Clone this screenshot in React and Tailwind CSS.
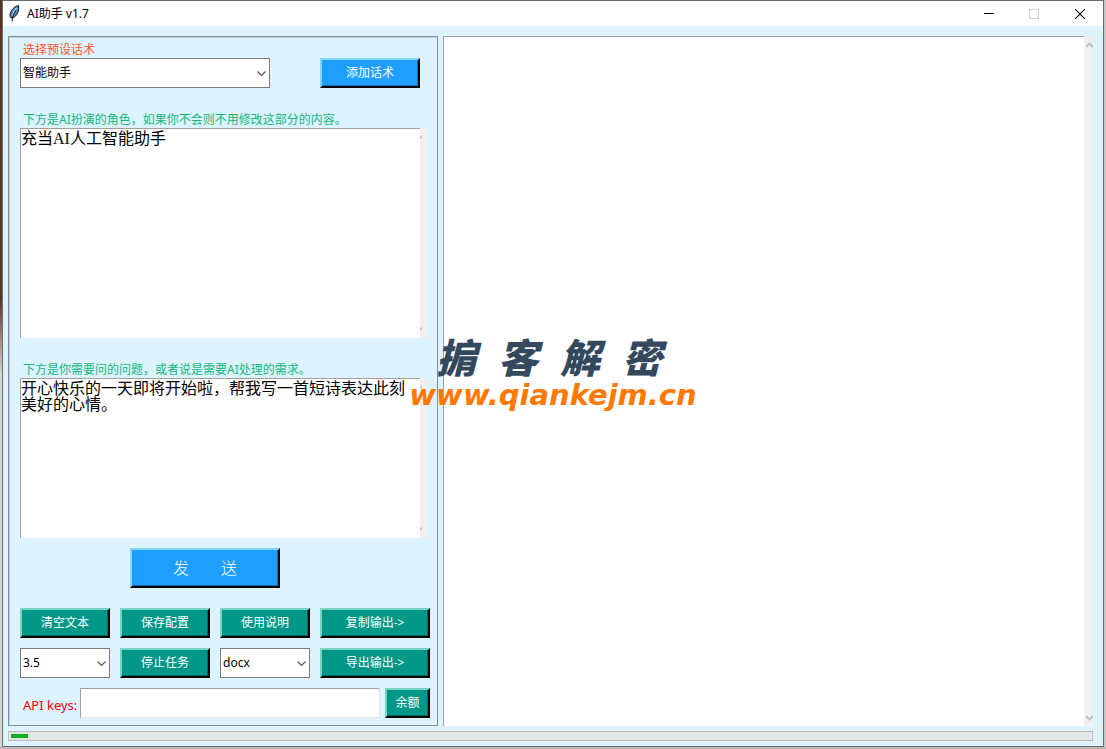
import { useState } from "react";

const Feather = () => (
  <svg width="11" height="17" viewBox="0 0 11 17" aria-hidden="true">
    <path
      d="M9.5 0.5C6.5 1 3.5 3.5 2 6.5c-1.3 2.500-1.200 4.500-0.500 6l2 0.500c2.500-1 4.500-3 5.500-6 0.800-2.500 0.800-4.500 0.500-6.500z"
      fill="#4f86bd"
      stroke="#10151c"
      strokeWidth="1"
    />
    <path d="M7.500 3C5.500 5 4.500 7.500 3.500 11" fill="none" stroke="#c4e2f7" strokeWidth="1.200" />
    <path d="M7 5c-2 3-3.500 6-4 11.500" fill="none" stroke="#10151c" strokeWidth="1" />
  </svg>
);

const TitleBar = () => (
  <header className="flex h-[25px] items-center bg-white pl-1.5">
    <Feather />
    <h1 className="ml-[7px] flex-1 text-[12px] leading-4 text-black">AI助手 v1.7</h1>
    <button type="button" aria-label="最小化" className="flex h-full w-[45px] items-center justify-center">
      <svg width="10" height="10" viewBox="0 0 10 10" shapeRendering="crispEdges">
        <path d="M0 4.5h10" stroke="#000" />
      </svg>
    </button>
    <button type="button" aria-label="最大化" disabled className="flex h-full w-[46px] items-center justify-center">
      <svg width="10" height="10" viewBox="0 0 10 10" shapeRendering="crispEdges">
        <rect x="0.5" y="0.5" width="9" height="9" fill="none" stroke="#ccc" />
      </svg>
    </button>
    <button type="button" aria-label="关闭" className="flex h-full w-[46px] items-center justify-center">
      <svg width="10" height="10" viewBox="0 0 10 10">
        <path d="M0 0l10 10M10 0L0 10" stroke="#000" strokeWidth="1.1" />
      </svg>
    </button>
  </header>
);

const BlueButton = ({ className, children }) => (
  <button
    type="button"
    className={`border-2 border-t-[#80d8ff] border-r-black border-b-black border-l-[#80d8ff] bg-[#1e9fff] text-white shadow-[inset_-1px_-1px_0_#156fb2] ${className}`}
  >
    {children}
  </button>
);

const GreenButton = ({ className = "", children }) => (
  <button
    type="button"
    className={`h-[30px] border-2 border-t-[#7ad3c3] border-r-black border-b-black border-l-[#7ad3c3] bg-[#009688] text-[12px] leading-4 whitespace-nowrap text-white shadow-[inset_-1px_-1px_0_#00695f] ${className}`}
  >
    {children}
  </button>
);

const ComboBox = ({ id, label, options, className = "" }) => {
  const [value, setValue] = useState(options[0]);

  return (
    <div className={`relative h-[30px] ${className}`}>
      <select
        id={id}
        aria-label={label}
        value={value}
        onChange={(e) => setValue(e.target.value)}
        className="h-full w-full appearance-none border border-[#7a7a7a] bg-white pl-0.5 text-[12px] leading-4 text-black outline-none"
      >
        {options.map((option) => (
          <option key={option}>{option}</option>
        ))}
      </select>
      <svg
        className="pointer-events-none absolute top-3 right-1"
        width="9"
        height="7"
        viewBox="0 0 9 7"
        fill="none"
        aria-hidden="true"
      >
        <path d="M0.5 1.5l4 4 4-4" stroke="#505050" strokeWidth="1.1" />
      </svg>
    </div>
  );
};

const TextBox = ({ id, label, defaultValue, className }) => (
  <div className="mr-[3px]">
    <label htmlFor={id} className="block pt-0.5 pl-[3px] text-[12px] leading-4 text-[#16b777]">
      {label}
    </label>
    <div className={`flex ${className}`}>
      <textarea
        id={id}
        defaultValue={defaultValue}
        spellCheck={false}
        className="block h-full min-w-0 flex-1 resize-none overflow-hidden border-t border-l border-[#a0a0a0] bg-white pt-0.5 font-['Liberation_Serif','Noto_Sans_CJK_SC',serif] text-[16px] leading-4 text-black outline-none"
      />
      <div className="flex w-[7px] flex-col justify-between bg-[#f0f0f0] py-[7px]">
        <svg width="2" height="4" viewBox="0 0 2 4" aria-hidden="true">
          <path d="M0 0l2 2v2L0 3z" fill="#bfbfbf" />
        </svg>
        <svg width="2" height="4" viewBox="0 0 2 4" aria-hidden="true">
          <path d="M2 0v2L0 4V1z" fill="#bfbfbf" />
        </svg>
      </div>
    </div>
  </div>
);

const ControlPanel = () => (
  <section className="flex w-[430px] shrink-0 flex-col border border-[#828f98] pt-[3px] pr-[7px] pb-[7px] pl-[11px] shadow-[inset_1px_1px_0_#c3d3dd]">
    <label htmlFor="preset" className="block pt-0.5 pl-[3px] text-[12px] leading-4 text-[#ff5722]">
      选择预设话术
    </label>
    <div className="mb-[22px] flex justify-between pr-2.5">
      <ComboBox id="preset" options={["智能助手"]} className="w-[250px]" />
      <BlueButton className="h-[30px] w-[100px] text-[12px] leading-4">添加话术</BlueButton>
    </div>

    <TextBox
      id="role"
      label="下方是AI扮演的角色，如果你不会则不用修改这部分的内容。"
      defaultValue="充当AI人工智能助手"
      className="mb-[22px] h-[210px]"
    />
    <TextBox
      id="question"
      label="下方是你需要问的问题，或者说是需要AI处理的需求。"
      defaultValue="开心快乐的一天即将开始啦，帮我写一首短诗表达此刻美好的心情。"
      className="h-[160px]"
    />

    <BlueButton className="mt-2.5 ml-[110px] flex h-10 w-[150px] items-center justify-center gap-8 text-[16px] leading-5 font-light">
      <span>发</span>
      <span>送</span>
    </BlueButton>

    <div className="mt-5 grid grid-cols-[9fr_9fr_9fr_11fr] gap-2.5">
      <GreenButton>清空文本</GreenButton>
      <GreenButton>保存配置</GreenButton>
      <GreenButton>使用说明</GreenButton>
      <GreenButton>复制输出-&gt;</GreenButton>
      <ComboBox id="model" label="模型" options={["3.5", "4.0"]} />
      <GreenButton>停止任务</GreenButton>
      <ComboBox id="format" label="格式" options={["docx", "txt"]} />
      <GreenButton>导出输出-&gt;</GreenButton>
    </div>

    <div className="mt-2.5 flex items-center">
      <label htmlFor="keys" className="w-[60px] shrink-0 pt-1 pl-[3px] text-[13px] leading-4 whitespace-nowrap text-[#ff0000]">
        API keys:
      </label>
      <input
        id="keys"
        type="text"
        className="h-[30px] min-w-0 flex-1 border border-t-[#a0a0a0] border-r-[#e3e3e3] border-b-[#e3e3e3] border-l-[#a0a0a0] bg-white px-1 text-[12px] outline-none"
      />
      <GreenButton className="ml-[5px] w-[45px]">余额</GreenButton>
    </div>
  </section>
);

const OutputPanel = () => (
  <section className="flex min-w-0 flex-1">
    <textarea
      aria-label="输出"
      readOnly
      className="block min-w-0 flex-1 resize-none border-t border-l border-[#a0a0a0] bg-white text-[16px] leading-4 outline-none"
    />
    <div className="flex w-[9px] flex-col items-end justify-between bg-[#f0f0f0] pt-1.5 pb-[5px]">
      <svg width="7" height="6" viewBox="0 0 7 6" fill="none" aria-hidden="true">
        <path d="M0 5l3.5-3.5L7 5" stroke="#bfbfbf" strokeWidth="2" />
      </svg>
      <svg width="7" height="6" viewBox="0 0 7 6" fill="none" aria-hidden="true">
        <path d="M0 1l3.5 3.5L7 1" stroke="#bfbfbf" strokeWidth="2" />
      </svg>
    </div>
  </section>
);

const Watermark = () => (
  <div className="pointer-events-none absolute inset-0 flex flex-col items-center justify-center italic">
    <p className="flex gap-[22px] pr-2 font-['Liberation_Sans','Noto_Sans_CJK_SC',sans-serif] text-[40px] leading-10 font-black text-[#34495e]">
      <span>掮</span>
      <span>客</span>
      <span>解</span>
      <span>密</span>
    </p>
    <p className="font-['DejaVu_Sans',sans-serif] text-[29px] leading-8 font-bold text-[#ff7800]">www.qiankejm.cn</p>
  </div>
);

const App = () => {
  const progress = 1.6;

  return (
    <div className="relative flex min-h-screen bg-[#b9b9b9] pb-0.5 font-['Noto_Sans','Noto_Sans_CJK_SC',sans-serif]">
      <div className="w-0.5 bg-linear-to-b from-[#5b3424] from-40% to-[#d6d6d6] to-50%" />
      <div className="flex min-w-0 flex-1 flex-col border border-[#6b6b6f] bg-[#ddf3ff]">
        <TitleBar />
        <main className="flex flex-1 flex-col pt-2.5 pr-2.5 pb-[5px] pl-[5px]">
          <div className="flex flex-1 gap-[5px]">
            <ControlPanel />
            <OutputPanel />
          </div>
          <div
            role="progressbar"
            aria-label="进度"
            aria-valuenow={progress}
            className="mt-[5px] h-2.5 border border-[#bcbcbc] bg-[#e6e6e6] px-0.5 py-0.5"
          >
            <div className="h-full bg-[#06b025]" style={{ width: `${progress}%` }} />
          </div>
        </main>
      </div>
      <div className="w-0.5 bg-[#c9c7c9]" />
      <Watermark />
    </div>
  );
};

export default App;
